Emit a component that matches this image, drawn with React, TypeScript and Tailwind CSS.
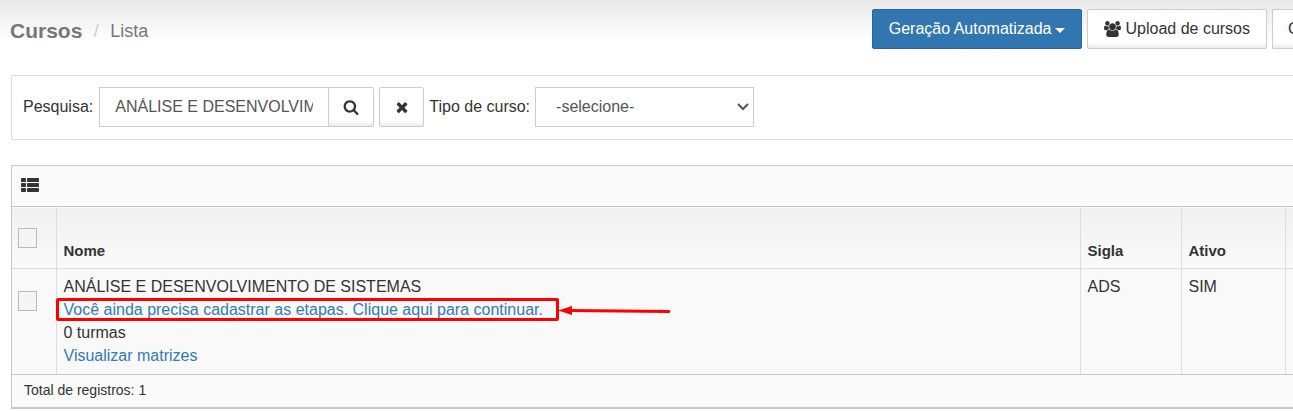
import { useState } from 'react';

/** A row of the course listing */
interface Curso {
  id: number;
  nome: string;
  turmas: number;
  sigla: string;
  ativo: boolean;
}

const cursos: Curso[] = [
  { id: 1, nome: 'ANÁLISE E DESENVOLVIMENTO DE SISTEMAS', turmas: 0, sigla: 'ADS', ativo: true },
];

const defaultButton =
  'h-10 shrink-0 border border-[#ccc] bg-linear-to-b from-white from-85% to-[#ebebeb] text-[#333]';

const checkbox = 'block h-5 w-[19px] appearance-none border border-[#bbb] bg-[#f5f5f5] checked:bg-[#337ab7]';

function UsersIcon() {
  return (
    <svg viewBox="0 0 1920 1792" className="h-4 w-[17px]" fill="currentColor" aria-hidden="true">
      <path d="M593 896q-162 5-265 128h-134q-82 0-138-40.5t-56-118.5q0-353 124-353 6 0 43.5 21t97.5 42.5 119 21.5q67 0 133-23-5 37-5 66 0 139 81 256zm1071 637q0 120-73 189.5t-194 69.5h-874q-121 0-194-69.5t-73-189.5q0-53 3.5-103.5t14-109 26.5-108.5 43-97.5 62-81 85.5-53.5 111.5-20q10 0 43 21.5t73 48 107 48 135 21.5 135-21.5 107-48 73-48 43-21.5q61 0 111.5 20t85.5 53.5 62 81 43 97.5 26.5 108.5 14 109 3.5 103.5zm-1024-1277q0 106-75 181t-181 75-181-75-75-181 75-181 181-75 181 75 75 181zm704 384q0 159-112.5 271.5t-271.5 112.5-271.5-112.5-112.5-271.5 112.5-271.5 271.5-112.5 271.5 112.5 112.5 271.5zm576 225q0 78-56 118.5t-138 40.5h-134q-103-123-265-128 81-117 81-256 0-29-5-66 66 23 133 23 59 0 119-21.5t97.5-42.5 43.5-21q124 0 124 353zm-128-609q0 106-75 181t-181 75-181-75-75-181 75-181 181-75 181 75 75 181z" />
    </svg>
  );
}

function SearchIcon() {
  return (
    <svg viewBox="0 0 1792 1792" className="size-4" fill="currentColor" aria-hidden="true">
      <path d="M1216 832q0-185-131.5-316.5t-316.5-131.5-316.5 131.5-131.5 316.5 131.5 316.5 316.5 131.5 316.5-131.5 131.5-316.5zm512 832q0 52-38 90t-90 38q-54 0-90-38l-343-342q-179 124-399 124-143 0-273.5-55.5t-225-150-150-225-55.5-273.5 55.5-273.5 150-225 225-150 273.5-55.5 273.5 55.5 225 150 150 225 55.5 273.5q0 220-124 399l343 343q37 37 37 90z" />
    </svg>
  );
}

function TimesIcon() {
  return (
    <svg viewBox="0 0 1792 1792" className="size-4" fill="currentColor" aria-hidden="true">
      <path d="M1490 1322q0 40-28 68l-136 136q-28 28-68 28t-68-28l-294-294-294 294q-28 28-68 28t-68-28l-136-136q-28-28-28-68t28-68l294-294-294-294q-28-28-28-68t28-68l136-136q28-28 68-28t68 28l294 294 294-294q28-28 68-28t68 28l136 136q28 28 28 68t-28 68l-294 294 294 294q28 28 28 68z" />
    </svg>
  );
}

function ListIcon() {
  return (
    <svg viewBox="0 0 18 14" className="h-3.5 w-[18px]" fill="currentColor" aria-hidden="true">
      {[0, 5, 10].map((y) => (
        <g key={y}>
          <rect x="0" y={y} width="5" height="4" rx="0.8" />
          <rect x="6" y={y} width="12" height="4" rx="0.8" />
        </g>
      ))}
    </svg>
  );
}

function PageHeader() {
  return (
    <header className="flex h-[75px] items-start justify-between bg-linear-to-b from-[#e8e8e8] to-white to-55% pt-[9px] pl-[10px]">
      <div className="flex h-11 items-center text-lg text-[#777]">
        <h1 className="text-[21px] font-bold">Cursos</h1>
        <span className="w-7 text-center text-[#ccc]">/</span>
        <span>Lista</span>
      </div>
      <div className="flex gap-[5px]">
        <button
          type="button"
          className="flex h-10 items-center gap-1 rounded-xs border border-[#2b669a] bg-[#3276b1] px-4 text-white"
        >
          Geração Automatizada
          <svg viewBox="0 0 10 5" className="mt-0.5 h-[5px] w-[10px]" fill="currentColor" aria-hidden="true">
            <path d="M0 0h10L5 5z" />
          </svg>
        </button>
        <button type="button" className={`${defaultButton} flex items-center gap-1 rounded-xs px-4`}>
          <UsersIcon />
          Upload de cursos
        </button>
        <button type="button" className={`${defaultButton} w-[21px] overflow-hidden rounded-l-xs border-r-0 pl-[15px] text-left`}>
          C
        </button>
      </div>
    </header>
  );
}

function SearchPanel() {
  const [pesquisa, setPesquisa] = useState('ANÁLISE E DESENVOLVIMENTO DE SISTEMAS');

  return (
    <form className="ml-[11px] flex h-[65px] items-center rounded-l-xs border border-r-0 border-[#ddd] pb-0.5 pl-[11px]">
      <label htmlFor="pesquisa" className="mr-1.5">
        Pesquisa:
      </label>
      <input
        id="pesquisa"
        type="text"
        value={pesquisa}
        onChange={(e) => setPesquisa(e.target.value)}
        className="h-10 w-[230px] border border-[#ccc] bg-white px-[15px] text-[#555]"
      />
      <button
        type="submit"
        aria-label="Pesquisar"
        className={`${defaultButton} flex w-[45px] items-center justify-center rounded-r-xs border-l-0`}
      >
        <SearchIcon />
      </button>
      <button
        type="button"
        aria-label="Limpar"
        onClick={() => setPesquisa('')}
        className={`${defaultButton} mx-[5px] flex w-[45px] items-center justify-center rounded-xs`}
      >
        <TimesIcon />
      </button>
      <label htmlFor="tipo" className="mr-[5px]">
        Tipo de curso:
      </label>
      <div className="relative">
        <select id="tipo" className="block h-10 w-[219px] appearance-none border border-[#ccc] bg-white px-5 text-[#555]">
          <option>-selecione-</option>
        </select>
        <svg
          viewBox="0 0 12 8"
          className="pointer-events-none absolute top-4 right-[5px] h-2 w-3"
          fill="none"
          stroke="#555"
          strokeWidth="2"
          aria-hidden="true"
        >
          <path d="M1 1l5 5 5-5" />
        </svg>
      </div>
    </form>
  );
}

function CursosTable() {
  return (
    <section className="mt-[25px] ml-[11px] border border-r-0 border-b-2 border-[#c8c8c8] bg-[#fafafa]">
      <div className="flex h-10 items-center pb-0.5 pl-[9px]">
        <button type="button" aria-label="Colunas">
          <ListIcon />
        </button>
      </div>
      <table className="w-full table-fixed border-collapse text-left">
        <thead className="border-t border-[#c4c4c4] bg-linear-to-b from-[#f0f0f0] to-[#fafafa] text-[15px]">
          <tr className="h-[62px]">
            <th className="w-11 border-r border-[#ddd] pl-1.5">
              <input type="checkbox" aria-label="Selecionar todos" className={checkbox} />
            </th>
            <th className="border-r border-[#ddd] px-[7px] pb-1.5 align-bottom">Nome</th>
            <th className="w-[101px] border-r border-[#ddd] px-[7px] pb-1.5 align-bottom">Sigla</th>
            <th className="w-[104px] border-r border-[#ddd] px-[7px] pb-1.5 align-bottom">Ativo</th>
            <th className="w-2 p-0" />
          </tr>
        </thead>
        <tbody>
          {cursos.map((curso) => (
            <tr key={curso.id} className="h-[105px] border-t border-[#ddd] bg-[#f9f9f9] align-top leading-[23px]">
              <td className="border-r border-[#ddd] pt-[22px] pl-1.5">
                <input type="checkbox" aria-label={curso.nome} className={checkbox} />
              </td>
              <td className="border-r border-[#ddd] px-[7px] pt-1.5">
                <div>{curso.nome}</div>
                <div className="relative w-fit pr-2">
                  <a href="#etapas" className="text-[#337ab7]">
                    Você ainda precisa cadastrar as etapas. Clique aqui para continuar.
                  </a>
                  {/* callout around the pending step */}
                  <span className="pointer-events-none absolute -inset-x-2 inset-y-0 rounded-xs border-3 border-[#f00]" />
                  <svg
                    viewBox="0 0 113 10"
                    className="pointer-events-none absolute top-2 left-full ml-[7px] h-[10px] w-[113px]"
                    aria-hidden="true"
                  >
                    <path d="M12 4.5L111 5.5" stroke="#f00" strokeWidth="3" strokeLinecap="round" />
                    <path d="M0 4.5L14 0v9z" fill="#f00" />
                  </svg>
                </div>
                <div>{curso.turmas} turmas</div>
                <a href="#matrizes" className="text-[#337ab7]">
                  Visualizar matrizes
                </a>
              </td>
              <td className="border-r border-[#ddd] px-[7px] pt-1.5">{curso.sigla}</td>
              <td className="border-r border-[#ddd] px-[7px] pt-1.5">{curso.ativo ? 'SIM' : 'NÃO'}</td>
              <td />
            </tr>
          ))}
        </tbody>
      </table>
      <div className="flex h-[33px] items-center border-t border-[#c8c8c8] pb-0.5 pl-3 text-sm">
        Total de registros: {cursos.length}
      </div>
    </section>
  );
}

export default function App() {
  return (
    <main className="bg-white font-['Liberation_Sans',Arial,sans-serif] text-base text-[#333]">
      <PageHeader />
      <SearchPanel />
      <CursosTable />
    </main>
  );
}
